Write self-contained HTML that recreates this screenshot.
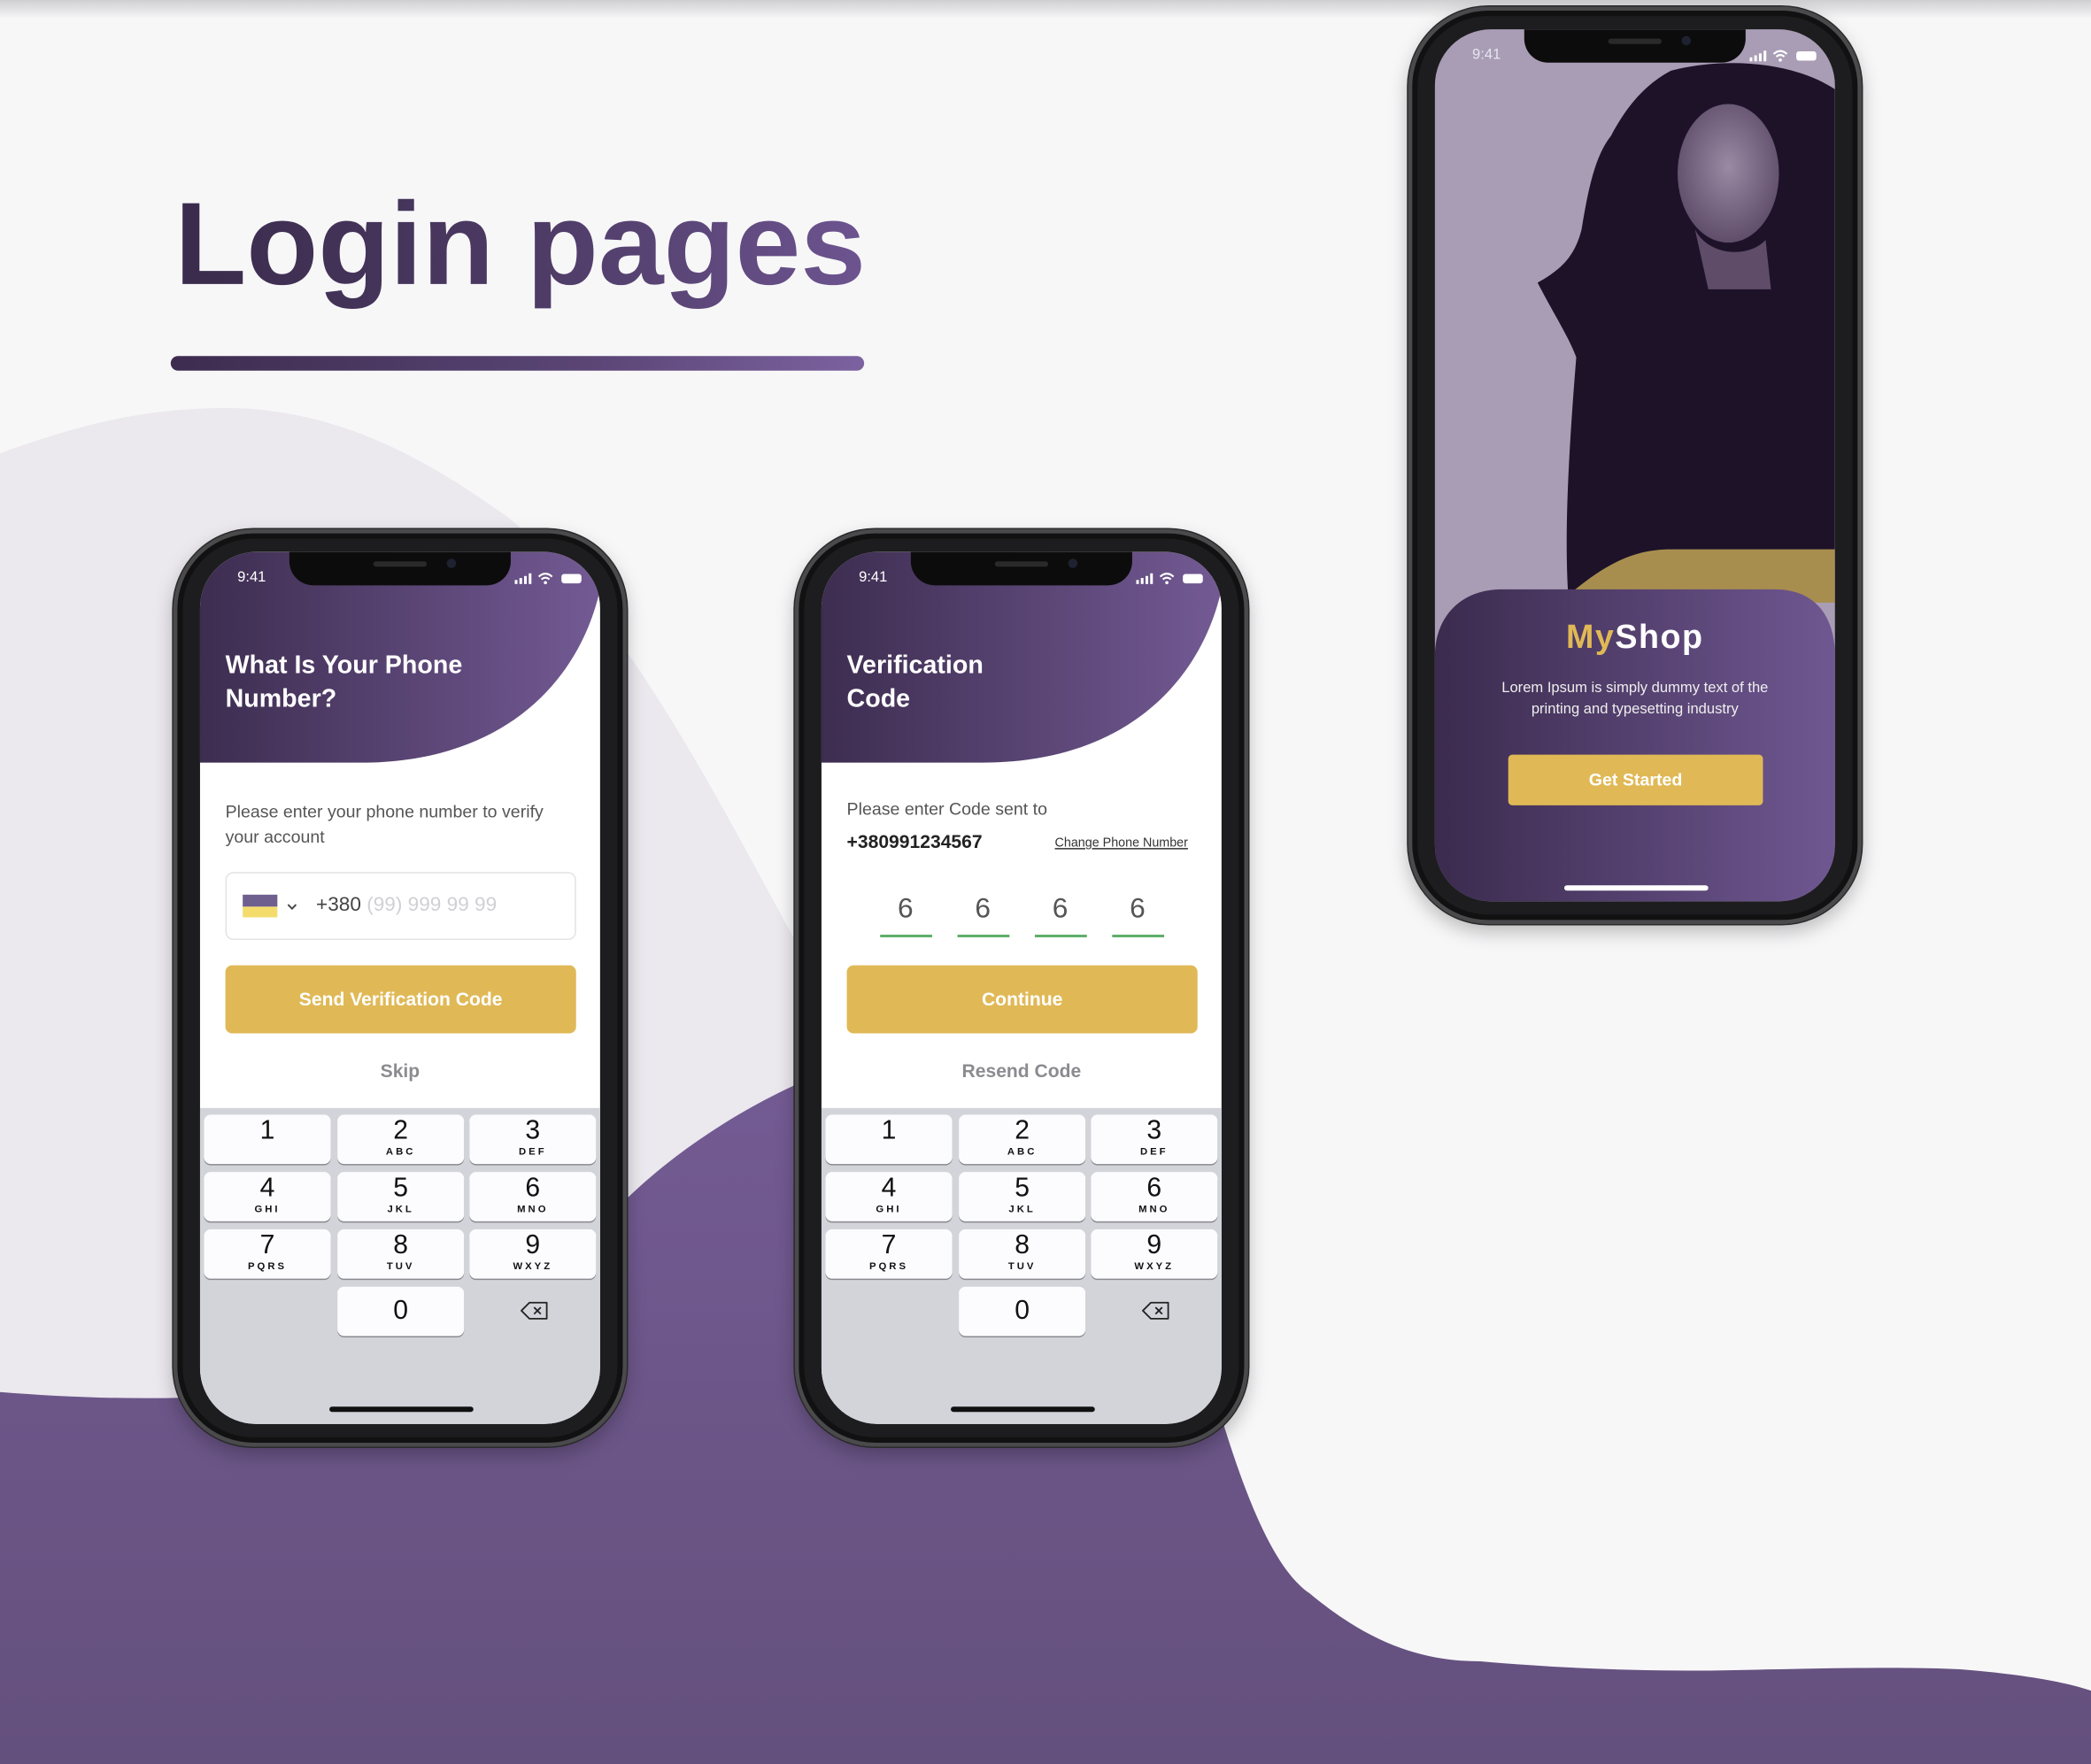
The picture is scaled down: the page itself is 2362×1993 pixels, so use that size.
<!DOCTYPE html>
<html><head><meta charset="utf-8">
<style>
*{margin:0;padding:0;box-sizing:border-box}
html,body{width:2362px;height:1993px;overflow:hidden;background:#f6f6f7;font-family:"Liberation Sans",sans-serif}
#w{position:absolute;left:0;top:0;width:1568px;height:1323px;transform:scale(1.50638,1.50643);transform-origin:0 0;background:#f7f7f8}
.abs{position:absolute}
.phone{position:absolute;width:340px;height:688px;border-radius:60px;background:#1d1d1f;border:3px solid #4a4a4c;box-shadow:0 0 0 1px #2a2a2a,inset 0 0 0 4px #111,0 6px 14px rgba(0,0,0,.25)}
.screen{position:absolute;left:17px;top:14px;width:300px;height:654px;border-radius:42px;overflow:hidden;background:#fff}
.notch{position:absolute;left:67px;top:0;width:166px;height:25px;background:#0c0c0c;border-radius:0 0 18px 18px}
.notch:before{content:"";position:absolute;left:63px;top:7px;width:40px;height:4px;border-radius:2px;background:#2a2a2a}
.notch:after{content:"";position:absolute;left:118px;top:5px;width:7px;height:7px;border-radius:50%;background:#1e2230}
.time{position:absolute;left:28px;top:13px;color:#fff;font-size:11px}
.ttl{position:absolute;left:19px;top:73px;color:#fff;font-weight:bold;font-size:19px;line-height:25px}
.kb{position:absolute;left:0;top:417px;width:300px;height:237px;background:#d2d4da}
.key{position:absolute;width:95px;height:37px;background:#fcfcfe;border-radius:5px;box-shadow:0 1px 0 #8a8b90;text-align:center;color:#111}
.key b{display:block;font-weight:normal;font-size:20px;line-height:21px;padding-top:2px}
.key i{display:block;font-style:normal;font-weight:bold;font-size:7.5px;letter-spacing:2px;line-height:9px}
.home{position:absolute;left:97px;top:641px;width:108px;height:4px;border-radius:2px;background:#111}
.ybtn{position:absolute;left:19px;top:310px;width:263px;height:51px;background:#e0b956;border-radius:5px;color:#fff;font-weight:bold;font-size:14px;text-align:center;line-height:51px}
.gray{position:absolute;left:0;width:300px;text-align:center;color:#8b8b90;font-weight:bold;font-size:14px}
</style></head><body>
<div id="w">
<div class="abs" style="left:0;top:0;width:1568px;height:14px;background:linear-gradient(#cfcfd1,#f7f7f8)"></div>
<svg class="abs" style="left:0;top:0" width="1568" height="1323" viewBox="0 0 1568 1323">
<defs><linearGradient id="pg" x1="0" y1="0" x2="0" y2="1"><stop offset="0" stop-color="#735b93"/><stop offset="1" stop-color="#64507d"/></linearGradient></defs>
<path d="M0,340 C60,318 110,306 169,306 C260,306 330,352 381,388 C420,420 445,450 466,483 C520,560 560,640 600,712 L700,1000 L0,1060 Z" fill="#ebe8ee"/>
<path d="M0,1044 C150,1056 330,1050 420,960 C445,935 460,910 470,899 C510,860 560,830 600,812 L905,1000 C915,1040 915,1060 919,1073 C940,1140 960,1180 982,1195 C1030,1235 1070,1246 1110,1246 C1180,1252 1230,1253 1282,1253 C1370,1251 1430,1250 1470,1252 C1520,1256 1550,1262 1568,1268 L1568,1323 L0,1323 Z" fill="url(#pg)"/>
</svg>

<div class="abs" style="left:131px;top:128px;font-size:88px;font-weight:bold;letter-spacing:0;line-height:110px;background:linear-gradient(90deg,#3a2b4c,#4c3a63 50%,#6d5490);-webkit-background-clip:text;background-clip:text;color:transparent">Login pages</div>
<div class="abs" style="left:128px;top:267px;width:520px;height:11px;border-radius:6px;background:linear-gradient(90deg,#3d2c4f,#5a4575 60%,#7c62a0)"></div>

<!-- PHONE 1 -->
<div class="phone" style="left:130px;top:397px">
<div class="screen">
<svg class="abs" style="left:0;top:0" width="300" height="160"><defs><linearGradient id="hg" x1="0" x2="1"><stop offset="0" stop-color="#3d2d50"/><stop offset="1" stop-color="#735a94"/></linearGradient></defs><path d="M0,0 H300 V28 C285,95 230,158 120,158 H0 Z" fill="url(#hg)"/></svg>
<div class="notch"></div>
<div class="time">9:41</div>
<svg class="abs" style="left:236px;top:15px" width="54" height="10"><rect x="0" y="6" width="2" height="3" fill="#fff"/><rect x="3.5" y="4.5" width="2" height="4.5" fill="#fff"/><rect x="7" y="3" width="2" height="6" fill="#fff"/><rect x="10.5" y="1" width="2" height="8" fill="#fff"/><path d="M18,3.5 Q23,-1 28,3.5 M20,5.5 Q23,3 26,5.5" stroke="#fff" stroke-width="1.4" fill="none"/><circle cx="23" cy="8" r="1.2" fill="#fff"/><rect x="35" y="1.5" width="15" height="7" rx="2" fill="#fff"/></svg>
<div class="ttl">What Is Your Phone<br>Number?</div>
<div class="abs" style="left:19px;top:185px;font-size:13px;line-height:19px;color:#555">Please enter your phone number to verify<br>your account</div>
<div class="abs" style="left:19px;top:240px;width:263px;height:51px;border:1px solid #e3e3e6;border-radius:6px"></div>
<div class="abs" style="left:32px;top:257px;width:26px;height:9px;background:#6f5f8f"></div>
<div class="abs" style="left:32px;top:266px;width:26px;height:8px;background:#f3dc6c"></div>
<svg class="abs" style="left:65px;top:263px" width="8" height="6"><path d="M1,1.5 L4,4.5 L7,1.5" stroke="#444" stroke-width="1.3" fill="none"/></svg>
<div class="abs" style="left:87px;top:256px;font-size:15px;color:#444">+380 <span style="color:#d0d0d4">(99) 999 99 99</span></div>
<div class="ybtn">Send Verification Code</div>
<div class="gray" style="top:381px">Skip</div>
<div class="kb">
<div class="key" style="left:3px;top:5px"><b>1</b></div>
<div class="key" style="left:103px;top:5px"><b>2</b><i>ABC</i></div>
<div class="key" style="left:202px;top:5px"><b>3</b><i>DEF</i></div>
<div class="key" style="left:3px;top:48px"><b>4</b><i>GHI</i></div>
<div class="key" style="left:103px;top:48px"><b>5</b><i>JKL</i></div>
<div class="key" style="left:202px;top:48px"><b>6</b><i>MNO</i></div>
<div class="key" style="left:3px;top:91px"><b>7</b><i>PQRS</i></div>
<div class="key" style="left:103px;top:91px"><b>8</b><i>TUV</i></div>
<div class="key" style="left:202px;top:91px"><b>9</b><i>WXYZ</i></div>
<div class="key" style="left:103px;top:134px"><b style="padding-top:8px">0</b></div>
<svg class="abs" style="left:240px;top:144px" width="22" height="16"><path d="M7,2 H20 V14 H7 L1,8 Z" stroke="#222" stroke-width="1.2" fill="none" stroke-linejoin="round"/><path d="M10.5,5.5 L15.5,10.5 M15.5,5.5 L10.5,10.5" stroke="#222" stroke-width="1.2"/></svg>
</div>
<div class="home"></div>
</div></div>

<!-- PHONE 2 -->
<div class="phone" style="left:596px;top:397px">
<div class="screen">
<svg class="abs" style="left:0;top:0" width="300" height="160"><defs><linearGradient id="hg2" x1="0" x2="1"><stop offset="0" stop-color="#3d2d50"/><stop offset="1" stop-color="#735a94"/></linearGradient></defs><path d="M0,0 H300 V28 C285,95 230,158 120,158 H0 Z" fill="url(#hg2)"/></svg>
<div class="notch"></div>
<div class="time">9:41</div>
<svg class="abs" style="left:236px;top:15px" width="54" height="10"><rect x="0" y="6" width="2" height="3" fill="#fff"/><rect x="3.5" y="4.5" width="2" height="4.5" fill="#fff"/><rect x="7" y="3" width="2" height="6" fill="#fff"/><rect x="10.5" y="1" width="2" height="8" fill="#fff"/><path d="M18,3.5 Q23,-1 28,3.5 M20,5.5 Q23,3 26,5.5" stroke="#fff" stroke-width="1.4" fill="none"/><circle cx="23" cy="8" r="1.2" fill="#fff"/><rect x="35" y="1.5" width="15" height="7" rx="2" fill="#fff"/></svg>
<div class="ttl">Verification<br>Code</div>
<div class="abs" style="left:19px;top:185px;font-size:13px;color:#555">Please enter Code sent to</div>
<div class="abs" style="left:19px;top:209px;font-size:14px;font-weight:bold;color:#222">+380991234567</div>
<div class="abs" style="left:175px;top:213px;font-size:9.5px;color:#333;text-decoration:underline">Change Phone Number</div>
<div class="abs" style="left:44px;top:256px;width:38px;text-align:center;font-size:21px;color:#555">6</div>
<div class="abs" style="left:102px;top:256px;width:38px;text-align:center;font-size:21px;color:#555">6</div>
<div class="abs" style="left:160px;top:256px;width:38px;text-align:center;font-size:21px;color:#555">6</div>
<div class="abs" style="left:218px;top:256px;width:38px;text-align:center;font-size:21px;color:#555">6</div>
<div class="abs" style="left:44px;top:287px;width:39px;height:2px;background:#5fae6a"></div>
<div class="abs" style="left:102px;top:287px;width:39px;height:2px;background:#5fae6a"></div>
<div class="abs" style="left:160px;top:287px;width:39px;height:2px;background:#5fae6a"></div>
<div class="abs" style="left:218px;top:287px;width:39px;height:2px;background:#5fae6a"></div>
<div class="ybtn">Continue</div>
<div class="gray" style="top:381px">Resend Code</div>
<div class="kb">
<div class="key" style="left:3px;top:5px"><b>1</b></div>
<div class="key" style="left:103px;top:5px"><b>2</b><i>ABC</i></div>
<div class="key" style="left:202px;top:5px"><b>3</b><i>DEF</i></div>
<div class="key" style="left:3px;top:48px"><b>4</b><i>GHI</i></div>
<div class="key" style="left:103px;top:48px"><b>5</b><i>JKL</i></div>
<div class="key" style="left:202px;top:48px"><b>6</b><i>MNO</i></div>
<div class="key" style="left:3px;top:91px"><b>7</b><i>PQRS</i></div>
<div class="key" style="left:103px;top:91px"><b>8</b><i>TUV</i></div>
<div class="key" style="left:202px;top:91px"><b>9</b><i>WXYZ</i></div>
<div class="key" style="left:103px;top:134px"><b style="padding-top:8px">0</b></div>
<svg class="abs" style="left:240px;top:144px" width="22" height="16"><path d="M7,2 H20 V14 H7 L1,8 Z" stroke="#222" stroke-width="1.2" fill="none" stroke-linejoin="round"/><path d="M10.5,5.5 L15.5,10.5 M15.5,5.5 L10.5,10.5" stroke="#222" stroke-width="1.2"/></svg>
</div>
<div class="home"></div>
</div></div>

<!-- PHONE 3 -->
<div class="phone" style="left:1056px;top:5px">
<div class="screen" style="background:#a89db5">
<svg class="abs" style="left:0;top:0" width="300" height="654">
<defs><linearGradient id="cg" x1="0" x2="1"><stop offset="0" stop-color="#3b2b4e"/><stop offset="1" stop-color="#6f5791"/></linearGradient>
<radialGradient id="fg" cx=".5" cy=".45" r=".6"><stop offset="0" stop-color="#9a8aa3"/><stop offset="1" stop-color="#5a4866"/></radialGradient></defs>
<path d="M177,31 C220,20 270,25 300,45 L300,400 L100,425 C97,380 100,320 106,246 C100,230 90,215 77,190 C95,180 105,170 110,150 C115,120 120,95 132,80 C145,55 160,40 177,31 Z" fill="#1e1229"/>
<ellipse cx="220" cy="108" rx="38" ry="52" fill="url(#fg)"/>
<path d="M195,150 C205,170 235,172 248,158 L252,195 L205,195 Z" fill="#5e4c69"/>
<path d="M104,421 C130,400 150,390 177,390 H300 V430 H104 Z" fill="#a88e4e"/>
<path d="M0,470 C0,440 20,420 50,420 H255 C285,420 300,440 300,470 V654 H0 Z" fill="url(#cg)"/>
</svg>
<div class="notch"></div>
<div class="time" style="color:#e8e4ee">9:41</div>
<svg class="abs" style="left:236px;top:15px" width="54" height="10"><rect x="0" y="6" width="2" height="3" fill="#fff"/><rect x="3.5" y="4.5" width="2" height="4.5" fill="#fff"/><rect x="7" y="3" width="2" height="6" fill="#fff"/><rect x="10.5" y="1" width="2" height="8" fill="#fff"/><path d="M18,3.5 Q23,-1 28,3.5 M20,5.5 Q23,3 26,5.5" stroke="#fff" stroke-width="1.4" fill="none"/><circle cx="23" cy="8" r="1.2" fill="#fff"/><rect x="35" y="1.5" width="15" height="7" rx="2" fill="#fff"/></svg>
<div class="abs" style="left:0;top:442px;width:300px;text-align:center;font-size:25px;font-weight:bold;letter-spacing:1px;color:#fff"><span style="color:#e0b956">My</span>Shop</div>
<div class="abs" style="left:0;top:486px;width:300px;text-align:center;font-size:11px;line-height:16px;color:#eee">Lorem Ipsum is simply dummy text of the<br>printing and typesetting industry</div>
<div class="abs" style="left:55px;top:544px;width:191px;height:38px;background:#e0b956;border-radius:3px;color:#fff;font-weight:bold;font-size:13px;line-height:38px;text-align:center">Get Started</div>
<div class="home" style="top:642px;background:#fff"></div>
</div></div>
</div>
</body></html>
